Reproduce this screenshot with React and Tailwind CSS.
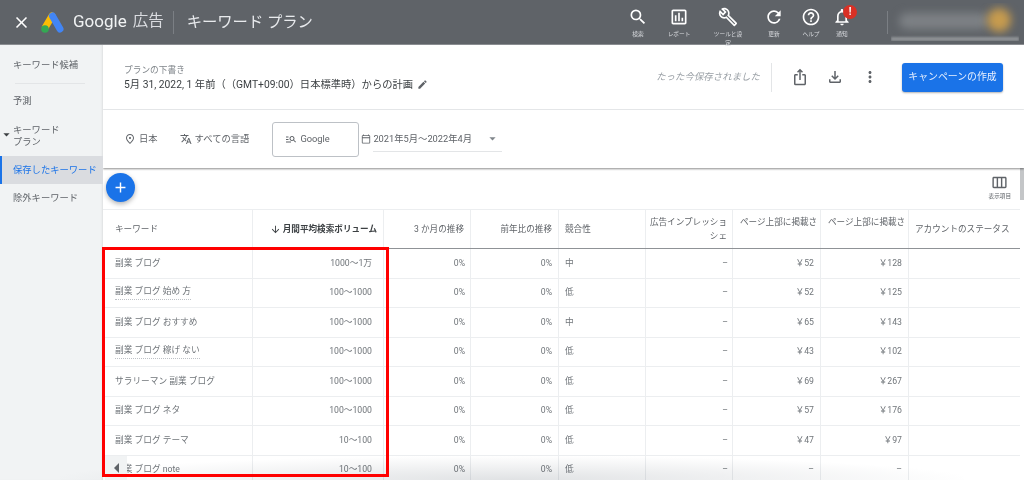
import React from "react";
import {
  MdAdd,
  MdArrowDownward,
  MdArrowDropDown,
  MdClose,
  MdEdit,
  MdHelpOutline,
  MdIosShare,
  MdManageSearch,
  MdMoreVert,
  MdNotificationsNone,
  MdOutlineAssessment,
  MdOutlineBuild,
  MdOutlineCalendarToday,
  MdOutlineFileDownload,
  MdOutlinePlace,
  MdOutlineViewWeek,
  MdRefresh,
  MdSearch,
  MdTranslate,
} from "react-icons/md";

const topItems = [
  { icon: MdSearch, label: "検索", width: "w-[40px]" },
  { icon: MdOutlineAssessment, label: "レポート", width: "w-[42px]" },
  { icon: MdOutlineBuild, label: "ツールと設定", width: "w-[56px]", narrow: true },
  { icon: MdRefresh, label: "更新", width: "w-[36px]" },
  { icon: MdHelpOutline, label: "ヘルプ", width: "w-[38px]" },
  { icon: MdNotificationsNone, label: "通知", width: "w-[24px]", badge: true },
];

const rows = [
  ["副業 ブログ", "1000〜1万", "中", "￥52", "￥128"],
  ["副業 ブログ 始め 方", "100〜1000", "低", "￥52", "￥125", true],
  ["副業 ブログ おすすめ", "100〜1000", "中", "￥65", "￥143"],
  ["副業 ブログ 稼げ ない", "100〜1000", "低", "￥43", "￥102", true],
  ["サラリーマン 副業 ブログ", "100〜1000", "低", "￥69", "￥267"],
  ["副業 ブログ ネタ", "100〜1000", "低", "￥57", "￥176"],
  ["副業 ブログ テーマ", "10〜100", "低", "￥47", "￥97"],
  ["副業 ブログ note", "10〜100", "低", "–", "–"],
];

const gridCols = "grid grid-cols-[150px_131px_87px_88px_87px_87px_88px_88px_111px]";
const cell = "h-full flex items-center border-r border-[#eceef0] overflow-hidden whitespace-nowrap";

const AdsLogo = () => (
  <svg width="23" height="21" viewBox="0 0 23 21" className="shrink-0">
    <line x1="11" y1="4" x2="4.5" y2="15" stroke="#fbbc04" strokeWidth="7" strokeLinecap="round" />
    <line x1="11.5" y1="4" x2="19" y2="17" stroke="#4285f4" strokeWidth="7" strokeLinecap="round" />
    <circle cx="4" cy="17" r="3.8" fill="#34a853" />
  </svg>
);

const TopBar = () => (
  <header className="h-[45px] bg-[#5f6368] flex items-center shrink-0 border-b border-[#8a8d91]">
    <MdClose className="ml-[12px] text-white" size={19} />
    <div className="ml-[10px]">
      <AdsLogo />
    </div>
    <span className="ml-[9px] text-[17px] text-[#f1f3f4]">Google</span>
    <span className="ml-[6px] text-[15.5px] text-[#dadce0]">広告</span>
    <div className="ml-[9px] w-px h-[23px] bg-[#7b7f84]" />
    <span className="ml-[13px] text-[15.3px] text-[#e8eaed]">キーワード プラン</span>
    <div className="ml-auto flex items-start h-full pt-[7px]">
      {topItems.map(({ icon: Icon, label, width, badge, narrow }) => (
        <div key={label} className={`${width} relative flex flex-col items-center`}>
          <Icon className="text-white" size={20} />
          <span className={`mt-[3px] text-center text-[5.7px] leading-[9px] text-[#dadce0] ${narrow ? "w-[30px]" : "whitespace-nowrap"}`}>
            {label}
          </span>
          {badge && (
            <span className="absolute left-[13px] top-[-2px] w-[14px] h-[14px] rounded-full bg-[#d93025] text-white text-[10px] leading-[14px] font-bold text-center">
              !
            </span>
          )}
        </div>
      ))}
    </div>
    <div className="ml-[33px] w-px h-[23px] bg-[#7b7f84]" />
    <div className="ml-[3px] mr-[5px] w-[128px] h-[38px] relative overflow-hidden">
      <div className="absolute left-[8px] top-[10px] w-[90px] h-[16px] rounded-full bg-[#7d8185] blur-[4px]" />
      <div className="absolute right-[8px] top-[5px] w-[24px] h-[24px] rounded-full bg-[#c69b4e] blur-[4px]" />
      <div className="absolute left-0 right-0 bottom-0 h-[4px] bg-[#8e9195] blur-[1px]" />
    </div>
  </header>
);

const SideItem = ({ children, className = "" }) => (
  <div className={`pl-[13px] text-[9.3px] text-[#5f6368] flex items-center ${className}`}>{children}</div>
);

const Sidebar = () => (
  <aside className="w-[103px] shrink-0 bg-[#f1f3f4] flex flex-col shadow-[inset_-2px_0_2px_-1px_rgba(0,0,0,0.08)]">
    <SideItem className="h-[37px] mt-[1px]">キーワード候補</SideItem>
    <div className="mx-[15px] w-[70px] border-t border-[#e3e5e7]" />
    <SideItem className="h-[33px]">予測</SideItem>
    <SideItem className="h-[37px] relative leading-[12px]">
      <MdArrowDropDown className="absolute left-[-1px] top-[10px] text-[#3c4043]" size={15} />
      キーワード
      <br />
      プラン
    </SideItem>
    <div className="h-[28px] mt-[2px] bg-[#dadce0] border-l-2 border-[#1a73e8] pl-[11px] flex items-center text-[9.3px] text-[#1a73e8] whitespace-nowrap">
      保存したキーワード
    </div>
    <SideItem className="h-[28px]">除外キーワード</SideItem>
  </aside>
);

const PlanHeader = () => (
  <div className="h-[65px] shrink-0 border-b border-[#eceef0] pl-[21px] pr-[21px] flex items-center">
    <div className="flex flex-col">
      <span className="text-[8.7px] leading-[12px] text-[#80868b]">プランの下書き</span>
      <div className="mt-[3px] flex items-center text-[#3c4043] text-[10.3px] leading-[12px] [text-spacing-trim:space-all]">
        5月 31, 2022, 1 年前（（GMT+09:00）日本標準時）からの計画
        <MdEdit className="ml-[4px] text-[#5f6368]" size={11} />
      </div>
    </div>
    <span className="ml-auto text-[9.45px] italic text-[#9aa0a6]">たった今保存されました</span>
    <div className="ml-[11px] w-px h-[29px] bg-[#e3e5e7]" />
    <MdIosShare className="ml-[19px] text-[#5f6368]" size={18} />
    <MdOutlineFileDownload className="ml-[17px] text-[#5f6368]" size={18} />
    <MdMoreVert className="ml-[17px] text-[#5f6368]" size={18} />
    <button className="ml-[23px] w-[101px] h-[29px] rounded-[3px] bg-[#1a73e8] text-[9.9px] text-[#e8f0fe] shadow-[0_1px_2px_rgba(0,0,0,0.3)]">
      キャンペーンの作成
    </button>
  </div>
);

const FilterRow = () => (
  <div className="h-[58px] shrink-0 relative z-10 bg-white shadow-[0_1px_2px_rgba(0,0,0,0.45)] pl-[21px] flex items-center text-[9.3px] text-[#5f6368]">
    <MdOutlinePlace size={12} />
    <span className="ml-[3px]">日本</span>
    <MdTranslate className="ml-[22px]" size={12} />
    <span className="ml-[3px]">すべての言語</span>
    <div className="ml-[23px] w-[87px] h-[35px] border border-[#bdc1c6] rounded-[3px] pl-[12px] flex items-center">
      <MdManageSearch size={12} />
      <span className="ml-[3px] text-[#5f6368]">Google</span>
    </div>
    <MdOutlineCalendarToday className="ml-[2px]" size={10} />
    <div className="ml-[2px] w-[129px] h-[26px] border-b border-[#e3e5e7] flex items-center justify-between">
      <span>2021年5月〜2022年4月</span>
      <MdArrowDropDown className="mr-[2px] text-[#80868b]" size={15} />
    </div>
  </div>
);

const TableHead = () => (
  <div className={`${gridCols} h-[39px] shrink-0 w-[917px] border-t border-[#eceef0] text-[8.6px] text-[#5f6368]`}>
    <div className={`${cell} pl-[12px]`}>キーワード</div>
    <div className={`${cell} justify-end pr-[6px] font-bold text-[#3c4043]`}>
      <MdArrowDownward className="mr-[2px]" size={11} />
      月間平均検索ボリューム
    </div>
    <div className={`${cell} justify-end pr-[6px]`}>3 か月の推移</div>
    <div className={`${cell} justify-end pr-[6px]`}>前年比の推移</div>
    <div className={`${cell} pl-[6px]`}>競合性</div>
    <div className={`${cell} flex-col items-end justify-center pr-[5px] leading-[14px]`}>
      <span>広告インプレッショ</span>
      <span>シェ</span>
    </div>
    <div className={`${cell} items-start pt-[6px] pl-[7px]`}>ページ上部に掲載さ</div>
    <div className={`${cell} items-start pt-[6px] pl-[7px]`}>ページ上部に掲載さ</div>
    <div className="h-full flex items-center pl-[6px] whitespace-nowrap">アカウントのステータス</div>
  </div>
);

const TableRow = ({ row }) => {
  const [keyword, volume, comp, low, high, dotted] = row;
  return (
    <div className={`${gridCols} h-[29.5px] shrink-0 border-b border-[#eceef0] text-[8.7px] text-[#70757a]`}>
      <div className={`${cell} pl-[12px]`}>
        <span className={dotted ? "border-b border-dotted border-[#bdc1c6] pb-[1px]" : ""}>{keyword}</span>
      </div>
      <div className={`${cell} justify-end pr-[11px]`}>{volume}</div>
      <div className={`${cell} justify-end pr-[5px]`}>0%</div>
      <div className={`${cell} justify-end pr-[6px]`}>0%</div>
      <div className={`${cell} pl-[6px]`}>{comp}</div>
      <div className={`${cell} justify-end pr-[4px]`}>–</div>
      <div className={`${cell} justify-end pr-[6px]`}>{low}</div>
      <div className={`${cell} justify-end pr-[6px]`}>{high}</div>
      <div />
    </div>
  );
};

const App = () => {
  return (
    <div
      className="relative w-[1024px] h-[480px] overflow-hidden flex flex-col bg-white blur-[0.35px]"
      style={{ fontFamily: 'Roboto, "Noto Sans CJK JP", sans-serif' }}
    >
      <TopBar />
      <div className="flex-1 flex min-h-0">
        <Sidebar />
        <main className="flex-1 min-w-0 overflow-hidden flex flex-col">
          <PlanHeader />
          <FilterRow />
          <div className="h-[41px] shrink-0 relative flex items-start justify-between">
            <button className="ml-[3px] mt-[5px] w-[29px] h-[29px] rounded-full bg-[#1a73e8] text-white flex items-center justify-center shadow-[0_2px_5px_rgba(0,0,0,0.3)]">
              <MdAdd size={17} />
            </button>
            <div className="mr-[13px] mt-[6px] flex flex-col items-center text-[#5f6368]">
              <MdOutlineViewWeek size={17} />
              <span className="mt-[1px] text-[5.6px] leading-[9px]">表示項目</span>
            </div>
            <div className="absolute right-0 top-0 w-[4px] h-[32px] bg-[#c4c6c8]" />
          </div>
          <TableHead />
          <div className="shrink-0 w-[917px] border-t border-[#8f9296]">
            {rows.map((row) => (
              <TableRow key={row[0]} row={row} />
            ))}
          </div>
        </main>
      </div>
      <div className="absolute left-[60px] right-[60px] bottom-0 h-[24px] mix-blend-multiply bg-[radial-gradient(ellipse_at_bottom,#e0e2e4,#ffffff_72%)]" />
      <div className="absolute left-[105px] bottom-0 w-[22px] h-[24px] bg-[#f1f3f4] flex items-center justify-center">
        <span className="w-0 h-0 border-y-[5px] border-y-transparent border-r-[5px] border-r-[#5f6368]" />
      </div>
      {/* highlight drawn on top of the screenshot */}
      <div className="absolute left-[102px] top-[247px] w-[287px] h-[230px] border-[3px] border-[#ff0000]" />
    </div>
  );
};

export default App;
